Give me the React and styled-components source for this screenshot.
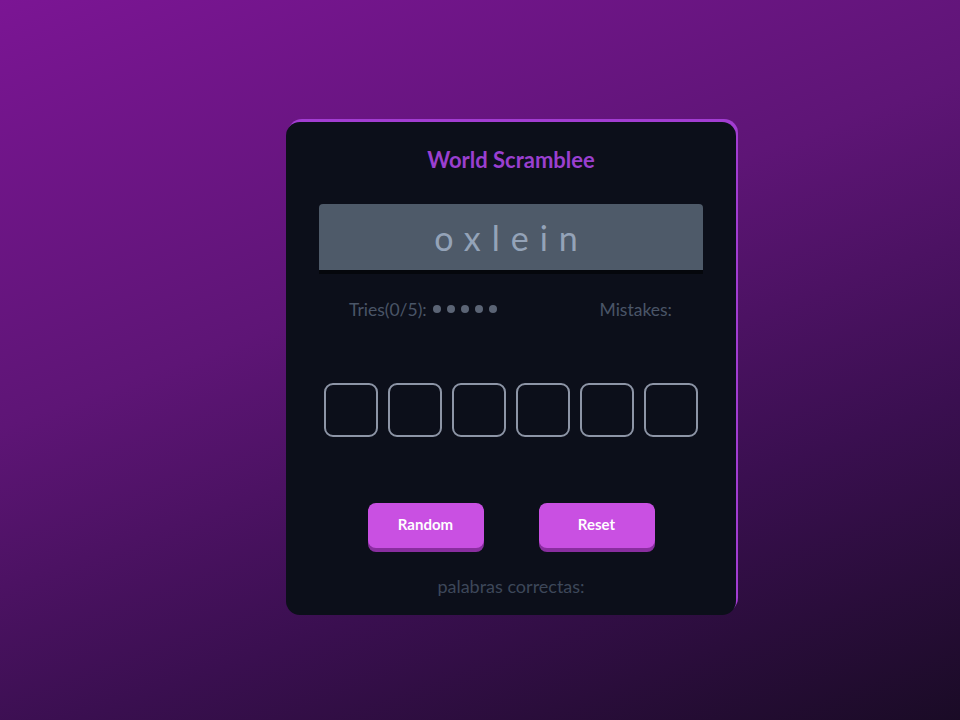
import React from 'react';
import styled, { createGlobalStyle } from 'styled-components';

const GlobalStyle = createGlobalStyle`
    html, body {
        margin: 0;
        padding: 0;
    }
    body {
        font-family: Lato, "Noto Sans", sans-serif;
        min-height: 100vh;
        background: linear-gradient(160deg, #7b1594 0%, #5e1576 40%, #3a0f50 70%, #1a0b26 100%);
    }
`

const tries = [0, 1, 2, 3, 4]
const slots = [0, 1, 2, 3, 4, 5]

function App() {
    return (
        <Page>
            <GlobalStyle />
            <Card>
                <Title>World Scramblee</Title>
                <WordBox>
                    <Word>oxlein</Word>
                </WordBox>
                <InfoRow>
                    <Info>
                        Tries(0/5):
                        <Dots>
                            {tries.map(t => <Dot key={t} />)}
                        </Dots>
                    </Info>
                    <Info>Mistakes:</Info>
                </InfoRow>
                <Inputs>
                    {slots.map(s => <LetterInput key={s} type="text" maxLength={1} />)}
                </Inputs>
                <Buttons>
                    <Button>Random</Button>
                    <Button>Reset</Button>
                </Buttons>
                <Footer>palabras correctas:</Footer>
            </Card>
        </Page>
    )
}

export default App;

const Page = styled.div`
    min-height: 720px;
    padding: 122px 0 0 286px;
    box-sizing: border-box;
`

const Card = styled.div`
    width: 450px;
    height: 493px;
    box-sizing: border-box;
    background: #0c0f1a;
    border-radius: 14px;
    box-shadow: 2px -3px 0 #a23dd2;
    padding: 24px 33px 0 33px;
    display: flex;
    flex-direction: column;
    align-items: center;
`

const Title = styled.h1`
    margin: 0;
    font-size: 22px;
    font-weight: 700;
    color: #9a3fcf;
    line-height: 28px;
`

const WordBox = styled.div`
    margin-top: 30px;
    width: 100%;
    height: 66px;
    background: #4e5a69;
    border-radius: 4px 4px 0 0;
    box-shadow: 0 4px 0 #05070c;
    display: flex;
    align-items: center;
    justify-content: center;
`

const Word = styled.span`
    font-size: 34px;
    color: #94a3b8;
    letter-spacing: 11px;
    margin-right: -1px;
    padding-top: 0;
`

const InfoRow = styled.div`
    margin-top: 29px;
    width: 100%;
    box-sizing: border-box;
    padding: 0 31px 0 30px;
    display: flex;
    justify-content: space-between;
    align-items: center;
`

const Info = styled.span`
    font-size: 17.5px;
    color: #4a5567;
    display: flex;
    align-items: center;
`

const Dots = styled.span`
    display: flex;
    gap: 6px;
    margin-left: 6px;
    margin-top: -2px;
`

const Dot = styled.span`
    width: 8px;
    height: 8px;
    border-radius: 50%;
    background: #5b6475;
`

const Inputs = styled.div`
    margin-top: 63px;
    display: flex;
    gap: 10px;
`

const LetterInput = styled.input`
    width: 54px;
    height: 54px;
    box-sizing: border-box;
    border: 2px solid #8d95a6;
    border-radius: 9px;
    background: transparent;
    outline: none;
    color: #cbd5e1;
    text-align: center;
    font-size: 24px;
    padding: 0;
`

const Buttons = styled.div`
    margin-top: 66px;
    display: flex;
    gap: 55px;
`

const Button = styled.button`
    width: 116px;
    height: 45px;
    border: none;
    border-radius: 8px;
    background: #c950e2;
    box-shadow: 0 4px 0 #8a2ea0;
    color: #ffffff;
    font-family: Lato, "Noto Sans", sans-serif;
    font-size: 15px;
    font-weight: 700;
    cursor: pointer;
    padding: 0 0 4px 0;
`

const Footer = styled.p`
    margin: 27px 0 0 0;
    font-size: 18px;
    color: #3d4759;
`
